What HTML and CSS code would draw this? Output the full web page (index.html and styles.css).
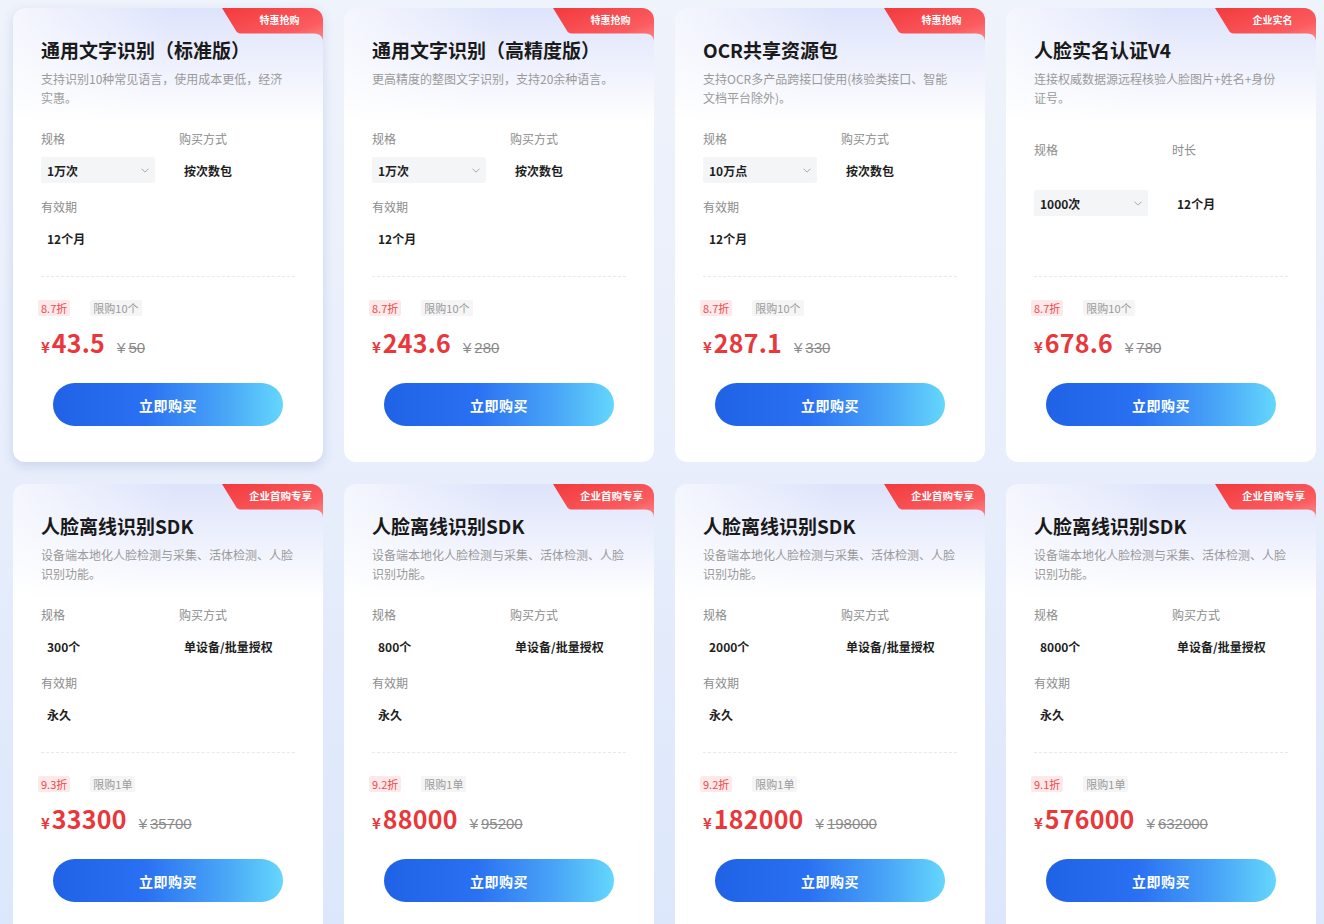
FILE: index.html
```html
<!DOCTYPE html>
<html lang="zh-CN">
<head>
<meta charset="utf-8">
<title>产品购买</title>
<link rel="stylesheet" href="styles.css">
</head>
<body>
<main class="grid">

  <!-- Card 1 -->
  <section class="card card--active">
    <div class="badge"><svg class="badge-bg" width="101" height="34" viewBox="0 0 101 34"><defs><linearGradient id="bg1" x1="0" y1="0" x2="1" y2="1"><stop offset="0" stop-color="#f23a3d"/><stop offset="0.7" stop-color="#fb5c60"/><stop offset="1" stop-color="#fd8a8d"/></linearGradient></defs><path d="M0 0H101V34C101 29 98 25.5 92 25.5H19C16 25.5 14.5 24 13.5 22Z" fill="url(#bg1)"/></svg><span class="badge-text">特惠抢购</span></div>
    <h3 class="title">通用文字识别（标准版）</h3>
    <p class="desc">支持识别10种常见语言，使用成本更低，经济实惠。</p>
    <div class="specs">
      <div class="field"><div class="label">规格</div><div class="select">1万次<svg class="chev" width="8" height="5" viewBox="0 0 8 5"><path d="M0.5 0.7L4 4.2L7.5 0.7" fill="none" stroke="#a8a8a8" stroke-width="1"/></svg></div></div>
      <div class="field"><div class="label">购买方式</div><div class="value value--r">按次数包</div></div>
      <div class="field"><div class="label">有效期</div><div class="value">12个月</div></div>
    </div>
    <div class="divider"></div>
    <div class="tags"><span class="tag tag--off">8.7折</span><span class="tag tag--limit">限购10个</span></div>
    <div class="price"><span class="cur">¥</span><span class="num">43.5</span><span class="orig"><span class="orig-cur">¥</span>50</span></div>
    <button class="buy">立即购买</button>
  </section>

  <!-- Card 2 -->
  <section class="card">
    <div class="badge"><svg class="badge-bg" width="101" height="34" viewBox="0 0 101 34"><defs><linearGradient id="bg2" x1="0" y1="0" x2="1" y2="1"><stop offset="0" stop-color="#f23a3d"/><stop offset="0.7" stop-color="#fb5c60"/><stop offset="1" stop-color="#fd8a8d"/></linearGradient></defs><path d="M0 0H101V34C101 29 98 25.5 92 25.5H19C16 25.5 14.5 24 13.5 22Z" fill="url(#bg2)"/></svg><span class="badge-text">特惠抢购</span></div>
    <h3 class="title">通用文字识别（高精度版）</h3>
    <p class="desc">更高精度的整图文字识别，支持20余种语言。</p>
    <div class="specs">
      <div class="field"><div class="label">规格</div><div class="select">1万次<svg class="chev" width="8" height="5" viewBox="0 0 8 5"><path d="M0.5 0.7L4 4.2L7.5 0.7" fill="none" stroke="#a8a8a8" stroke-width="1"/></svg></div></div>
      <div class="field"><div class="label">购买方式</div><div class="value value--r">按次数包</div></div>
      <div class="field"><div class="label">有效期</div><div class="value">12个月</div></div>
    </div>
    <div class="divider"></div>
    <div class="tags"><span class="tag tag--off">8.7折</span><span class="tag tag--limit">限购10个</span></div>
    <div class="price"><span class="cur">¥</span><span class="num">243.6</span><span class="orig"><span class="orig-cur">¥</span>280</span></div>
    <button class="buy">立即购买</button>
  </section>

  <!-- Card 3 -->
  <section class="card">
    <div class="badge"><svg class="badge-bg" width="101" height="34" viewBox="0 0 101 34"><defs><linearGradient id="bg3" x1="0" y1="0" x2="1" y2="1"><stop offset="0" stop-color="#f23a3d"/><stop offset="0.7" stop-color="#fb5c60"/><stop offset="1" stop-color="#fd8a8d"/></linearGradient></defs><path d="M0 0H101V34C101 29 98 25.5 92 25.5H19C16 25.5 14.5 24 13.5 22Z" fill="url(#bg3)"/></svg><span class="badge-text">特惠抢购</span></div>
    <h3 class="title">OCR共享资源包</h3>
    <p class="desc">支持OCR多产品跨接口使用(核验类接口、智能文档平台除外)。</p>
    <div class="specs">
      <div class="field"><div class="label">规格</div><div class="select">10万点<svg class="chev" width="8" height="5" viewBox="0 0 8 5"><path d="M0.5 0.7L4 4.2L7.5 0.7" fill="none" stroke="#a8a8a8" stroke-width="1"/></svg></div></div>
      <div class="field"><div class="label">购买方式</div><div class="value value--r">按次数包</div></div>
      <div class="field"><div class="label">有效期</div><div class="value">12个月</div></div>
    </div>
    <div class="divider"></div>
    <div class="tags"><span class="tag tag--off">8.7折</span><span class="tag tag--limit">限购10个</span></div>
    <div class="price"><span class="cur">¥</span><span class="num">287.1</span><span class="orig"><span class="orig-cur">¥</span>330</span></div>
    <button class="buy">立即购买</button>
  </section>

  <!-- Card 4 -->
  <section class="card">
    <div class="badge"><svg class="badge-bg" width="101" height="34" viewBox="0 0 101 34"><defs><linearGradient id="bg4" x1="0" y1="0" x2="1" y2="1"><stop offset="0" stop-color="#f23a3d"/><stop offset="0.7" stop-color="#fb5c60"/><stop offset="1" stop-color="#fd8a8d"/></linearGradient></defs><path d="M0 0H101V34C101 29 98 25.5 92 25.5H19C16 25.5 14.5 24 13.5 22Z" fill="url(#bg4)"/></svg><span class="badge-text">企业实名</span></div>
    <h3 class="title">人脸实名认证V4</h3>
    <p class="desc">连接权威数据源远程核验人脸图片+姓名+身份证号。</p>
    <div class="specs specs--tall">
      <div class="field"><div class="label">规格</div><div class="select">1000次<svg class="chev" width="8" height="5" viewBox="0 0 8 5"><path d="M0.5 0.7L4 4.2L7.5 0.7" fill="none" stroke="#a8a8a8" stroke-width="1"/></svg></div></div>
      <div class="field"><div class="label">时长</div><div class="value value--r">12个月</div></div>
    </div>
    <div class="divider"></div>
    <div class="tags"><span class="tag tag--off">8.7折</span><span class="tag tag--limit">限购10个</span></div>
    <div class="price"><span class="cur">¥</span><span class="num">678.6</span><span class="orig"><span class="orig-cur">¥</span>780</span></div>
    <button class="buy">立即购买</button>
  </section>

  <!-- Card 5 -->
  <section class="card">
    <div class="badge"><svg class="badge-bg" width="101" height="34" viewBox="0 0 101 34"><defs><linearGradient id="bg5" x1="0" y1="0" x2="1" y2="1"><stop offset="0" stop-color="#f23a3d"/><stop offset="0.7" stop-color="#fb5c60"/><stop offset="1" stop-color="#fd8a8d"/></linearGradient></defs><path d="M0 0H101V34C101 29 98 25.5 92 25.5H19C16 25.5 14.5 24 13.5 22Z" fill="url(#bg5)"/></svg><span class="badge-text badge-text--wide">企业首购专享</span></div>
    <h3 class="title">人脸离线识别SDK</h3>
    <p class="desc">设备端本地化人脸检测与采集、活体检测、人脸识别功能。</p>
    <div class="specs">
      <div class="field"><div class="label">规格</div><div class="value">300个</div></div>
      <div class="field"><div class="label">购买方式</div><div class="value value--r">单设备/批量授权</div></div>
      <div class="field"><div class="label">有效期</div><div class="value">永久</div></div>
    </div>
    <div class="divider"></div>
    <div class="tags"><span class="tag tag--off">9.3折</span><span class="tag tag--limit">限购1单</span></div>
    <div class="price"><span class="cur">¥</span><span class="num">33300</span><span class="orig"><span class="orig-cur">¥</span>35700</span></div>
    <button class="buy">立即购买</button>
  </section>

  <!-- Card 6 -->
  <section class="card">
    <div class="badge"><svg class="badge-bg" width="101" height="34" viewBox="0 0 101 34"><defs><linearGradient id="bg6" x1="0" y1="0" x2="1" y2="1"><stop offset="0" stop-color="#f23a3d"/><stop offset="0.7" stop-color="#fb5c60"/><stop offset="1" stop-color="#fd8a8d"/></linearGradient></defs><path d="M0 0H101V34C101 29 98 25.5 92 25.5H19C16 25.5 14.5 24 13.5 22Z" fill="url(#bg6)"/></svg><span class="badge-text badge-text--wide">企业首购专享</span></div>
    <h3 class="title">人脸离线识别SDK</h3>
    <p class="desc">设备端本地化人脸检测与采集、活体检测、人脸识别功能。</p>
    <div class="specs">
      <div class="field"><div class="label">规格</div><div class="value">800个</div></div>
      <div class="field"><div class="label">购买方式</div><div class="value value--r">单设备/批量授权</div></div>
      <div class="field"><div class="label">有效期</div><div class="value">永久</div></div>
    </div>
    <div class="divider"></div>
    <div class="tags"><span class="tag tag--off">9.2折</span><span class="tag tag--limit">限购1单</span></div>
    <div class="price"><span class="cur">¥</span><span class="num">88000</span><span class="orig"><span class="orig-cur">¥</span>95200</span></div>
    <button class="buy">立即购买</button>
  </section>

  <!-- Card 7 -->
  <section class="card">
    <div class="badge"><svg class="badge-bg" width="101" height="34" viewBox="0 0 101 34"><defs><linearGradient id="bg7" x1="0" y1="0" x2="1" y2="1"><stop offset="0" stop-color="#f23a3d"/><stop offset="0.7" stop-color="#fb5c60"/><stop offset="1" stop-color="#fd8a8d"/></linearGradient></defs><path d="M0 0H101V34C101 29 98 25.5 92 25.5H19C16 25.5 14.5 24 13.5 22Z" fill="url(#bg7)"/></svg><span class="badge-text badge-text--wide">企业首购专享</span></div>
    <h3 class="title">人脸离线识别SDK</h3>
    <p class="desc">设备端本地化人脸检测与采集、活体检测、人脸识别功能。</p>
    <div class="specs">
      <div class="field"><div class="label">规格</div><div class="value">2000个</div></div>
      <div class="field"><div class="label">购买方式</div><div class="value value--r">单设备/批量授权</div></div>
      <div class="field"><div class="label">有效期</div><div class="value">永久</div></div>
    </div>
    <div class="divider"></div>
    <div class="tags"><span class="tag tag--off">9.2折</span><span class="tag tag--limit">限购1单</span></div>
    <div class="price"><span class="cur">¥</span><span class="num">182000</span><span class="orig"><span class="orig-cur">¥</span>198000</span></div>
    <button class="buy">立即购买</button>
  </section>

  <!-- Card 8 -->
  <section class="card">
    <div class="badge"><svg class="badge-bg" width="101" height="34" viewBox="0 0 101 34"><defs><linearGradient id="bg8" x1="0" y1="0" x2="1" y2="1"><stop offset="0" stop-color="#f23a3d"/><stop offset="0.7" stop-color="#fb5c60"/><stop offset="1" stop-color="#fd8a8d"/></linearGradient></defs><path d="M0 0H101V34C101 29 98 25.5 92 25.5H19C16 25.5 14.5 24 13.5 22Z" fill="url(#bg8)"/></svg><span class="badge-text badge-text--wide">企业首购专享</span></div>
    <h3 class="title">人脸离线识别SDK</h3>
    <p class="desc">设备端本地化人脸检测与采集、活体检测、人脸识别功能。</p>
    <div class="specs">
      <div class="field"><div class="label">规格</div><div class="value">8000个</div></div>
      <div class="field"><div class="label">购买方式</div><div class="value value--r">单设备/批量授权</div></div>
      <div class="field"><div class="label">有效期</div><div class="value">永久</div></div>
    </div>
    <div class="divider"></div>
    <div class="tags"><span class="tag tag--off">9.1折</span><span class="tag tag--limit">限购1单</span></div>
    <div class="price"><span class="cur">¥</span><span class="num">576000</span><span class="orig"><span class="orig-cur">¥</span>632000</span></div>
    <button class="buy">立即购买</button>
  </section>

</main>
</body>
</html>
```

FILE: styles.css
```css
* { box-sizing: border-box; }

html, body {
  margin: 0;
  height: 924px;
  overflow: hidden;
}

body {
  font-family: "Noto Sans CJK SC", "Noto Sans", "Liberation Sans", sans-serif;
  background: linear-gradient(180deg, #eff3fb 0%, #e8eefb 50%, #dce7fb 100%);
  color: #1f1f1f;
}

.grid {
  display: grid;
  grid-template-columns: repeat(4, 310px);
  column-gap: 21px;
  row-gap: 22px;
  padding: 8px 8px 0 13px;
}

.card {
  position: relative;
  height: 454px;
  padding: 0 28px;
  border-radius: 12px;
  overflow: hidden;
  background:
    linear-gradient(105deg, rgba(255,255,255,0.7) 0%, rgba(255,255,255,0) 38%),
    linear-gradient(180deg, #dde3fb 0px, rgba(255,255,255,0) 115px),
    #ffffff;
}

.card--active {
  box-shadow: 0 4px 12px rgba(40, 80, 170, 0.16);
}

/* ribbon badge */
.badge {
  position: absolute;
  top: 0;
  right: 0;
  width: 101px;
  height: 34px;
}
.badge-bg { display: block; }
.badge-text {
  position: absolute;
  top: 0;
  left: 14px;
  right: 0;
  height: 25px;
  line-height: 24px;
  text-align: center;
  font-size: 10px;
  font-weight: 700;
  color: #fff;
}
.badge-text--wide { font-size: 10.5px; left: 16px; }

.title {
  margin: 0;
  padding-top: 29px;
  font-size: 19px;
  line-height: 26px;
  font-weight: 700;
  color: #1a1a1a;
  white-space: nowrap;
}

.desc {
  margin: 6px 0 0;
  width: 253px;
  height: 38px;
  font-size: 12px;
  line-height: 19px;
  color: #9a9a9a;
}

.specs {
  height: 169px;
  padding-top: 23px;
  display: grid;
  grid-template-columns: 138px 1fr;
  grid-auto-rows: min-content;
  row-gap: 15px;
}
.specs--tall { padding-top: 34px; }
.specs--tall .select,
.specs--tall .value { margin-top: 31px; }

.label {
  font-size: 12px;
  line-height: 18px;
  color: #8c8c8c;
}

.select,
.value {
  margin-top: 9px;
  height: 26px;
  display: flex;
  align-items: center;
  padding: 0 6px;
  font-size: 12px;
  font-weight: 700;
  color: #1f1f1f;
}
.value--r { padding-left: 5px; }

.select {
  width: 114px;
  justify-content: space-between;
  background: #f4f5f7;
  border-radius: 2px;
  padding-right: 6px;
}
.chev { display: block; }

.divider {
  border-top: 1px dashed #e9e9e9;
}

.tags {
  margin-top: 23px;
  display: flex;
  gap: 20px;
  height: 16px;
}
.tag {
  font-size: 11px;
  line-height: 16px;
  padding: 0 3px;
  border-radius: 2px;
}
.tag--off {
  margin-left: -3px;
  color: #ee4b4d;
  background: #fde9e9;
}
.tag--limit {
  color: #9a9a9a;
  background: #f5f5f6;
}

.price {
  margin-top: 10px;
  height: 32px;
  display: flex;
  align-items: baseline;
  color: #e8383b;
}
.cur {
  font-size: 15px;
  font-weight: 700;
  margin-right: 2px;
}
.num {
  font-size: 25px;
  line-height: 32px;
  font-weight: 700;
  letter-spacing: 0.2px;
}
.orig {
  margin-left: 12px;
  font-size: 15px;
  color: #8a8a8a;
  text-decoration: line-through;
  font-family: "Liberation Sans", "Noto Sans CJK SC", sans-serif;
}
.orig-cur {
  margin-right: 3px;
}

.buy {
  display: block;
  margin: 25px auto 0;
  width: 230px;
  height: 43px;
  border: 0;
  border-radius: 22px;
  background: linear-gradient(90deg, #1f62e6 0%, #2a70f2 40%, #49a6f7 75%, #64d7fc 100%);
  color: #fff;
  font-family: "Noto Sans CJK SC", "Noto Sans", sans-serif;
  font-size: 14px;
  font-weight: 700;
  letter-spacing: 0.5px;
  cursor: pointer;
}
```
